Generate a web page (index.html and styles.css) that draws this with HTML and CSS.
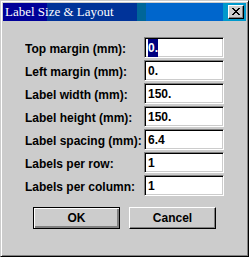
FILE: index.html
```html
<!DOCTYPE html>
<html>
<head>
<meta charset="utf-8">
<link rel="stylesheet" href="styles.css">
</head>
<body>
<div class="window">
  <div class="titlebar">
    <span class="title">Label Size &amp; Layout</span>
    <span class="close"><svg width="8" height="7" viewBox="0 0 8 7"><path d="M0 0h2v1h1v1h2v-1h1v-1h2v1h-1v1h-1v1h-1v1h1v1h1v1h1v1h-2v-1h-1v-1h-2v1h-1v1h-2v-1h1v-1h1v-1h1v-1h-1v-1h-1v-1h-1z" fill="#000"/></svg></span>
  </div>
  <div class="content">
    <div class="form">
      <label>Top margin (mm):</label><div class="field"><span class="sel">0.</span></div>
      <label>Left margin (mm):</label><div class="field">0.</div>
      <label>Label width (mm):</label><div class="field">150.</div>
      <label>Label height (mm):</label><div class="field">150.</div>
      <label>Label spacing (mm):</label><div class="field">6.4</div>
      <label>Labels per row:</label><div class="field">1</div>
      <label>Labels per column:</label><div class="field">1</div>
    </div>
    <div class="buttons">
      <div class="btn default"><span>OK</span></div>
      <div class="btn"><span>Cancel</span></div>
    </div>
  </div>
</div>
</body>
</html>
```
FILE: styles.css
```css
html, body { margin: 0; padding: 0; background: #cccccc; }
body { width: 249px; height: 257px; overflow: hidden; }
.window {
  width: 249px; height: 257px; box-sizing: border-box;
  background: #cccccc;
  border-top: 1px solid #cccccc; border-left: 1px solid #cccccc;
  border-right: 1px solid #000; border-bottom: 1px solid #000;
  box-shadow: inset 1px 1px 0 #fff, inset -1px -1px 0 #808080;
  padding: 2px;
  display: flex; flex-direction: column;
}
.titlebar {
  height: 18px; display: flex; align-items: center; justify-content: space-between;
  background: linear-gradient(to right, #000099 0, #000099 44px, #003399 44px, #003399 134px, #006699 134px, #006699 143px, #0066cc 143px, #0066cc 220px, #0099cc 220px);
  padding: 0 2px 0 2px;
}
.title {
  color: #fff; font-family: "Liberation Serif", serif; font-size: 13px; letter-spacing: 0;
}
.close {
  width: 16px; height: 14px; box-sizing: border-box; background: #cccccc;
  border-top: 1px solid #fff; border-left: 1px solid #fff;
  border-right: 1px solid #000; border-bottom: 1px solid #000;
  box-shadow: inset -1px -1px 0 #808080;
  display: flex; align-items: center; justify-content: center;
}
.close svg { display: block; margin-left: -1px; margin-top: -1px; }
.content { padding: 16px 0 0 22px; }
.form {
  display: grid; grid-template-columns: 119px 80px; grid-auto-rows: 21px; row-gap: 2px;
}
label, .field, .btn {
  font-family: "Liberation Sans", Arial, sans-serif; font-weight: bold; font-size: 12px; color: #000;
}
label { display: flex; align-items: center; white-space: nowrap; overflow: hidden; padding-top: 2px; }
.field {
  box-sizing: border-box; background: #fff;
  border-top: 1px solid #808080; border-left: 1px solid #808080;
  border-right: 1px solid #fff; border-bottom: 1px solid #fff;
  box-shadow: inset 1px 1px 0 #000, inset -1px -1px 0 #cccccc;
  padding: 0 0 0 3px; display: flex; align-items: center;
}
.sel { background: #000080; color: #fff; padding: 2px 0; }
.buttons { display: flex; gap: 9px; margin: 11px 0 0 8px; }
.btn {
  width: 87px; height: 22px; box-sizing: border-box;
  border-top: 1px solid #fff; border-left: 1px solid #fff;
  border-right: 1px solid #000; border-bottom: 1px solid #000;
  box-shadow: inset -1px -1px 0 #808080;
  display: flex; align-items: center; justify-content: center;
}
.btn.default {
  border: 1px solid #000;
  box-shadow: inset 1px 1px 0 #fff, inset -2px -2px 0 #808080, inset -1px -1px 0 #000;
}
```
